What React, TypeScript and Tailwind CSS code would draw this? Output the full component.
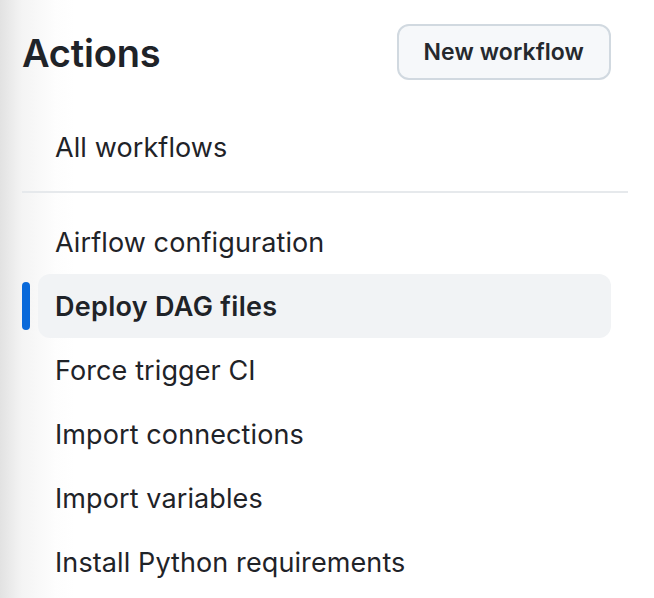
import React from 'react';

const workflows = [
    'Airflow configuration',
    'Deploy DAG files',
    'Force trigger CI',
    'Import connections',
    'Import variables',
    'Install Python requirements',
];

const ACTIVE = 'Deploy DAG files';

const App: React.FC = () => {
    return (
        <div
            className="min-h-screen w-full bg-[linear-gradient(to_right,#e2e2e2_0px,#f4f4f4_22px,#fdfdfd_55px,#ffffff_75px)] text-[#1f2328]"
            style={{ fontFamily: 'Inter, "Liberation Sans", sans-serif' }}
        >
            <div className="pl-[22px] pr-[26px] pt-[24px]">
                {/* Header */}
                <div className="flex items-center justify-between pr-[17px] h-[56px]">
                    <h1 className="text-[38px] font-semibold tracking-[-0.2px] leading-none pt-[2px]">Actions</h1>
                    <button className="h-[56px] px-[25px] rounded-[12px] border-2 border-[#d1d9e0] bg-[#f6f8fa] text-[23px] font-semibold tracking-[0.1px] text-[#25292e] pt-[1px]">
                        New workflow
                    </button>
                </div>

                {/* All workflows */}
                <div className="mt-[35px] ml-[16px] mr-[17px]">
                    <div className="h-[64px] px-[17px] pt-[2px] flex items-center text-[27px] tracking-[0.1px]">All workflows</div>
                </div>

                <div className="mt-[12px] h-[2px] bg-[#e6e9ec]" />

                {/* Workflow list */}
                <ul className="mt-[17px] ml-[16px] mr-[17px]">
                    {workflows.map((name) => {
                        const active = name === ACTIVE;
                        return (
                            <li key={name} className="relative">
                                {active && (
                                    <span className="absolute left-[-16px] top-[8px] h-[48px] w-[8px] rounded-full bg-[#0969da]" />
                                )}
                                <div
                                    className={
                                        active
                                            ? 'h-[64px] px-[17px] pt-[2px] flex items-center rounded-[12px] bg-[#f1f3f5] text-[27px] font-semibold tracking-[0.3px]'
                                            : 'h-[64px] px-[17px] pt-[2px] flex items-center rounded-[12px] text-[27px] tracking-[0.1px]'
                                    }
                                >
                                    {name}
                                </div>
                            </li>
                        );
                    })}
                </ul>
            </div>
        </div>
    );
};

export default App;
